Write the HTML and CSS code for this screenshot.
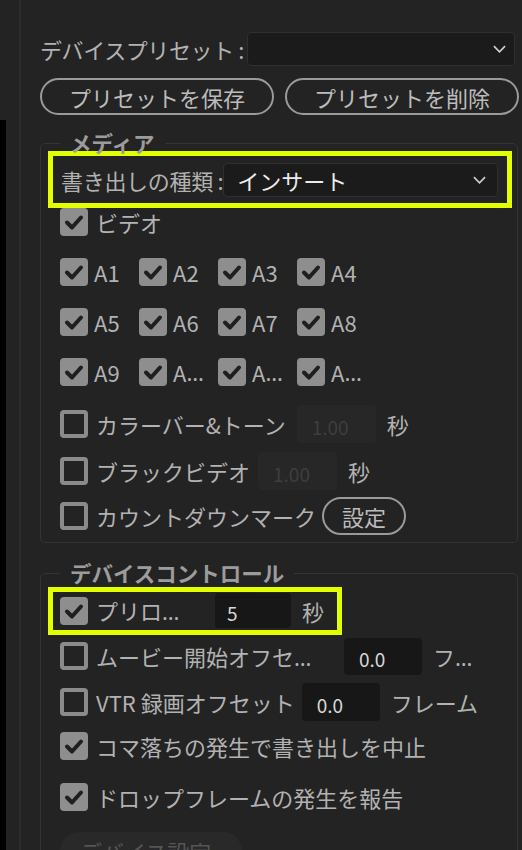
FILE: index.html
```html
<!DOCTYPE html>
<html lang="ja">
<head>
    <meta charset="UTF-8">
    <meta name="viewport" content="width=device-width, initial-scale=1.0">
    <title>書き出し設定</title>
    <link rel="stylesheet" href="styles.css">
</head>
<body>
    <div class="page">
        <div class="edge"></div>
        <div class="rule"></div>
        <div class="panel">
            <div class="preset-row">
                <span class="label">デバイスプリセット :</span>
                <div class="select">
                    <span class="value"></span>
                    <svg class="chev" viewBox="0 0 14 8"><polyline points="1,1 7,7 13,1"/></svg>
                </div>
            </div>
            <div class="btn-row">
                <button class="pill">プリセットを保存</button>
                <button class="pill">プリセットを削除</button>
            </div>

            <fieldset class="group">
                <legend>メディア</legend>
                <div class="mark mark-type">
                    <span class="label type-label">書き出しの種類 :</span>
                    <div class="select">
                        <span class="value">インサート</span>
                        <svg class="chev" viewBox="0 0 14 8"><polyline points="1,1 7,7 13,1"/></svg>
                    </div>
                </div>
                <div class="row check-row">
                    <span class="cb on"><svg viewBox="0 0 28 28"><path d="M7 14.5 L12 19.5 L21 9.5"/></svg></span>
                    <span class="label">ビデオ</span>
                </div>
                <div class="tracks">
                    <div class="track"><span class="cb on"><svg viewBox="0 0 28 28"><path d="M7 14.5 L12 19.5 L21 9.5"/></svg></span>A1</div>
                    <div class="track"><span class="cb on"><svg viewBox="0 0 28 28"><path d="M7 14.5 L12 19.5 L21 9.5"/></svg></span>A2</div>
                    <div class="track"><span class="cb on"><svg viewBox="0 0 28 28"><path d="M7 14.5 L12 19.5 L21 9.5"/></svg></span>A3</div>
                    <div class="track"><span class="cb on"><svg viewBox="0 0 28 28"><path d="M7 14.5 L12 19.5 L21 9.5"/></svg></span>A4</div>
                    <div class="track"><span class="cb on"><svg viewBox="0 0 28 28"><path d="M7 14.5 L12 19.5 L21 9.5"/></svg></span>A5</div>
                    <div class="track"><span class="cb on"><svg viewBox="0 0 28 28"><path d="M7 14.5 L12 19.5 L21 9.5"/></svg></span>A6</div>
                    <div class="track"><span class="cb on"><svg viewBox="0 0 28 28"><path d="M7 14.5 L12 19.5 L21 9.5"/></svg></span>A7</div>
                    <div class="track"><span class="cb on"><svg viewBox="0 0 28 28"><path d="M7 14.5 L12 19.5 L21 9.5"/></svg></span>A8</div>
                    <div class="track"><span class="cb on"><svg viewBox="0 0 28 28"><path d="M7 14.5 L12 19.5 L21 9.5"/></svg></span>A9</div>
                    <div class="track"><span class="cb on"><svg viewBox="0 0 28 28"><path d="M7 14.5 L12 19.5 L21 9.5"/></svg></span>A<span class="more">…</span></div>
                    <div class="track"><span class="cb on"><svg viewBox="0 0 28 28"><path d="M7 14.5 L12 19.5 L21 9.5"/></svg></span>A<span class="more">…</span></div>
                    <div class="track"><span class="cb on"><svg viewBox="0 0 28 28"><path d="M7 14.5 L12 19.5 L21 9.5"/></svg></span>A<span class="more">…</span></div>
                </div>
                <div class="row field-row bars">
                    <span class="cb"></span>
                    <span class="label">カラーバー&amp;トーン</span>
                    <span class="field off">1.00</span>
                    <span class="unit">秒</span>
                </div>
                <div class="row field-row black">
                    <span class="cb"></span>
                    <span class="label">ブラックビデオ</span>
                    <span class="field off">1.00</span>
                    <span class="unit">秒</span>
                </div>
                <div class="row field-row countdown">
                    <span class="cb"></span>
                    <span class="label">カウントダウンマーク</span>
                    <button class="pill small">設定</button>
                </div>
            </fieldset>

            <fieldset class="group device">
                <legend>デバイスコントロール</legend>
                <div class="mark mark-preroll">
                    <span class="cb on"><svg viewBox="0 0 28 28"><path d="M7 14.5 L12 19.5 L21 9.5"/></svg></span>
                    <span class="label fixed preroll">プリロ<span class="more">…</span></span>
                    <span class="field short">5</span>
                    <span class="unit">秒</span>
                </div>
                <div class="row field-row movie">
                    <span class="cb"></span>
                    <span class="label fixed movie-label">ムービー開始オフセ<span class="more">…</span></span>
                    <span class="field">0.0</span>
                    <span class="unit">フ<span class="more">…</span></span>
                </div>
                <div class="row field-row vtr">
                    <span class="cb"></span>
                    <span class="label">VTR 録画オフセット</span>
                    <span class="field">0.0</span>
                    <span class="unit">フレーム</span>
                </div>
                <div class="row check-row abort">
                    <span class="cb on"><svg viewBox="0 0 28 28"><path d="M7 14.5 L12 19.5 L21 9.5"/></svg></span>
                    <span class="label">コマ落ちの発生で書き出しを中止</span>
                </div>
                <div class="row check-row report">
                    <span class="cb on"><svg viewBox="0 0 28 28"><path d="M7 14.5 L12 19.5 L21 9.5"/></svg></span>
                    <span class="label">ドロップフレームの発生を報告</span>
                </div>
                <button class="ghost">デバイス設定</button>
            </fieldset>
        </div>
    </div>
</body>
</html>
```

FILE: styles.css
```css
* { box-sizing: border-box; }
body { margin: 0; background: #232323; color: #b2b2b2; font-family: "Noto Sans CJK JP", sans-serif; font-size: 22px; line-height: 1; }
.page { display: flex; height: 850px; overflow: hidden; }
.edge { flex: none; width: 6px; margin-top: 120px; background: #000; }
.rule { flex: none; width: 2px; margin-left: 13px; background: #2c2c2c; }
.panel { flex: 1; min-width: 0; padding: 32px 3px 0 19px; }

.label { white-space: nowrap; }
.more { font-family: "Noto Sans", sans-serif; letter-spacing: -1px; }

/* preset select + buttons */
.preset-row { display: flex; align-items: center; height: 34px; }
.preset-row .label { margin-right: 3px; letter-spacing: -0.4px; }
.select { flex: 1; height: 34px; display: flex; align-items: center; justify-content: space-between; padding: 0 11px 0 13px; background: #1b1b1b; border: 1px solid #2f2f2f; border-radius: 4px; }
.preset-row .select { margin-right: 4px; padding-right: 8px; }
.select .value { color: #ececec; }
.chev { width: 13px; height: 8px; fill: none; stroke: #cfcfcf; stroke-width: 1.8; }
.btn-row { display: flex; gap: 11px; margin-top: 12px; }
.pill { flex: 1; height: 37px; padding: 0; background: transparent; border: 2px solid #9a9a9a; border-radius: 19px; color: #bcbcbc; font: inherit; line-height: 1; }

/* group boxes */
.group { margin: 20px 1px 0 0; padding: 0 5px 7px 7px; border: 1px solid #343434; border-radius: 5px; min-width: 0; }
.group legend { margin-left: 12px; padding: 0 10px; height: 16px; line-height: 16px; font-size: 21.5px; font-weight: bold; color: #9c9c9c; }
.group.device { margin-top: 22px; }

/* yellow highlight */
.mark { display: flex; align-items: center; border: 5px solid #e2ff00; }
.mark-type { padding: 7px 9px 6px 8px; }
.mark-type .label { margin-right: 0; letter-spacing: -0.3px; }
.mark-preroll { width: fit-content; margin-top: 6px; padding: 1px 13px 2px 7px; }

/* rows */
.row { display: flex; align-items: center; padding-left: 12px; }
.check-row { height: 28px; }
.field-row { height: 38px; }
.cb { flex: none; width: 28px; height: 28px; margin-right: 8px; border: 4px solid #8b8b8b; border-radius: 4px; }
.cb.on { border: none; background: #8e8e8e; }
.cb svg { display: block; width: 28px; height: 28px; fill: none; stroke: #1f1f1f; stroke-width: 4; stroke-linecap: round; stroke-linejoin: round; }

.tracks { display: grid; grid-template-columns: repeat(4, 79px); row-gap: 22px; margin-top: 22px; padding-left: 12px; }
.track { display: flex; align-items: center; height: 28px; white-space: nowrap; }
.track .cb { margin-right: 6px; }

.field { flex: none; width: 79px; height: 38px; margin: 0 11px; padding: 4px 0 0 15px; display: flex; align-items: center; background: #171717; border-radius: 4px; color: #d6d6d6; font-size: 19px; }
.field.off { background: #272727; color: #3e3e3e; }
.field.short { width: 76px; height: 35px; padding-left: 12px; }
.unit { white-space: nowrap; }

.bars { margin-top: 19px; }
.black { margin-top: 9px; }
.black .field { margin-left: 8px; }
.countdown { margin-top: 7px; }
.pill.small { flex: none; width: 84px; height: 38px; margin-left: 6px; }

.fixed { flex: none; }
.preroll { width: 108px; }
.movie { margin-top: 2px; }
.movie-label { width: 237px; }
.movie .field { width: 78px; height: 37px; }
.vtr { margin-top: 8px; }
.vtr .field { width: 78px; margin-left: 7px; }
.abort { margin-top: 11px; }
.report { margin-top: 23px; }

.ghost { display: block; width: 182px; height: 38px; margin: 21px 0 0 12px; padding: 0 0 0 20px; text-align: left; background: #292929; border: none; border-radius: 19px; color: #555; font: inherit; }
```
